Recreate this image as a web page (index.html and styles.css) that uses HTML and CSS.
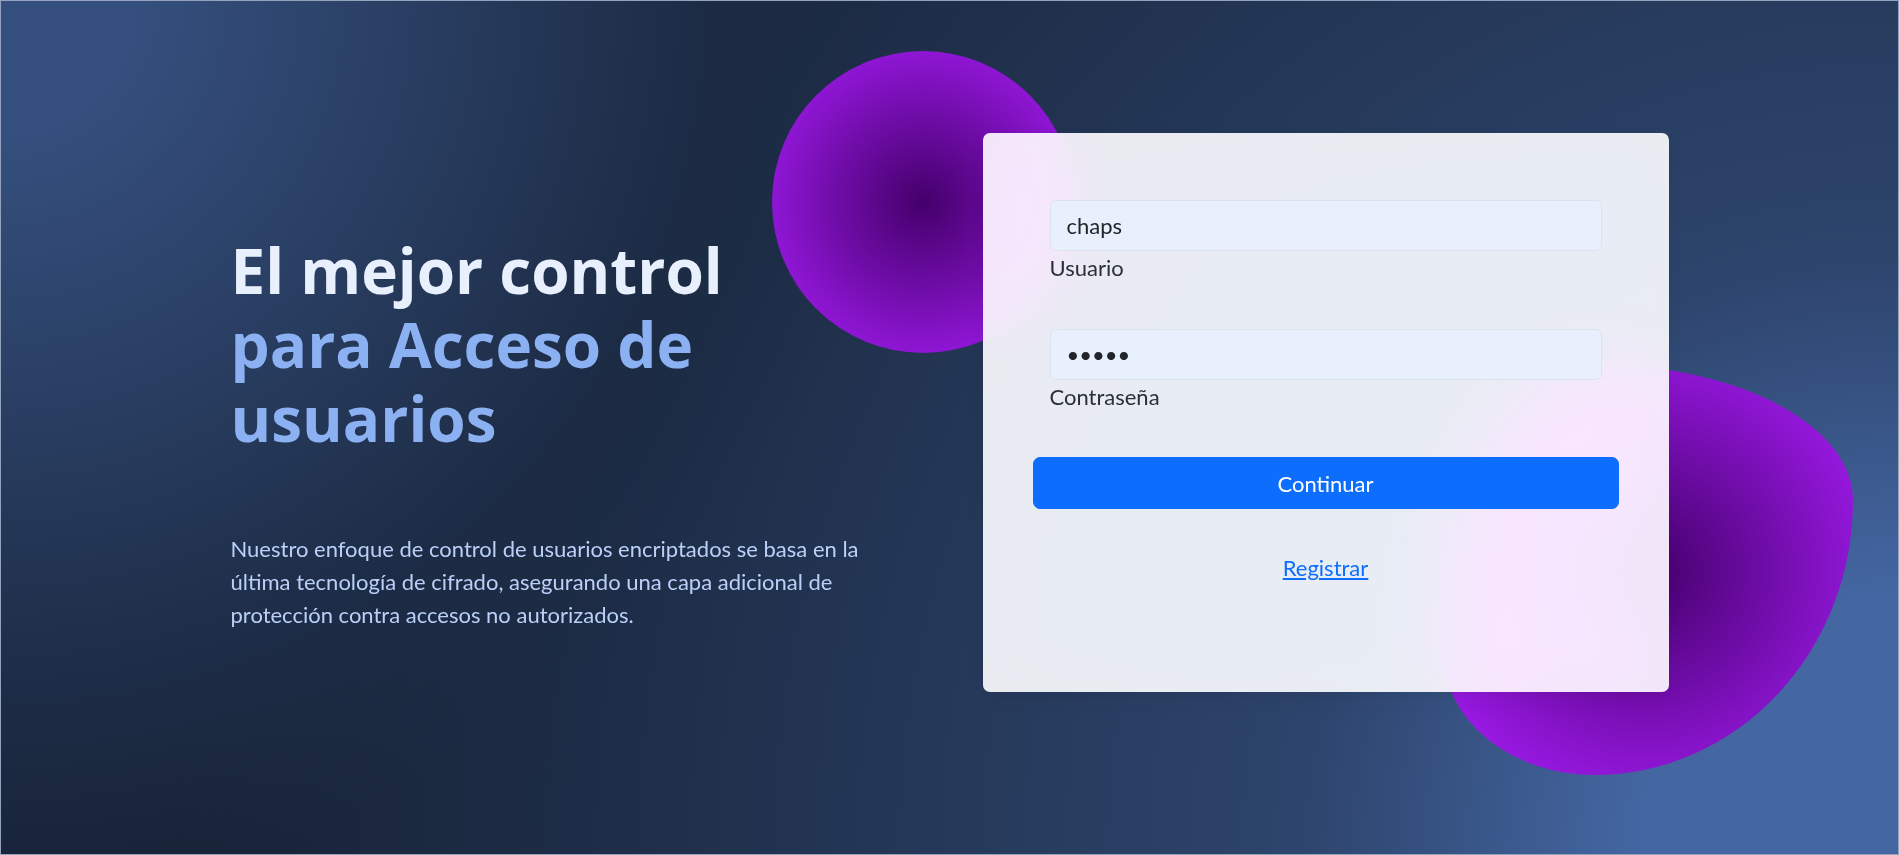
FILE: index.html
```html
<!DOCTYPE html>
<html lang="es">
<head>
<meta charset="utf-8">
<title>Acceso de usuarios</title>
<link rel="stylesheet" href="styles.css">
</head>
<body>
<section class="hero">
  <div class="container">
    <div class="col col-text">
      <h1 class="headline">El mejor control<br><span class="headline-accent">para Acceso de usuarios</span></h1>
      <p class="lead-text">Nuestro enfoque de control de usuarios encriptados se basa en la última tecnología de cifrado, asegurando una capa adicional de protección contra accesos no autorizados.</p>
    </div>
    <div class="col col-form">
      <div class="shape shape-circle"></div>
      <div class="shape shape-blob"></div>
      <div class="card">
        <form class="form">
          <div class="field">
            <input class="input" type="text" value="chaps" id="usuario">
            <label class="label" for="usuario">Usuario</label>
          </div>
          <div class="field field-last">
            <input class="input" type="password" value="12345" id="clave">
            <label class="label" for="clave">Contraseña</label>
          </div>
          <button class="btn" type="button">Continuar</button>
          <div class="register"><a href="#" class="link">Registrar</a></div>
        </form>
      </div>
    </div>
  </div>
</section>
</body>
</html>
```
FILE: styles.css
```css
* { box-sizing: border-box; }

html, body {
  margin: 0;
  padding: 0;
}

body {
  font-family: "Lato", "Liberation Sans", sans-serif;
  font-size: 22px;
  line-height: 33px;
  color: #212529;
}

.hero {
  width: 1899px;
  height: 855px;
  overflow: hidden;
  border: 1px solid #93a2bd;
  background-color: hsl(218, 41%, 15%);
  background-image:
    radial-gradient(894px circle at 0% 0%,
      hsl(218, 41%, 35%) 15%,
      hsl(218, 41%, 30%) 35%,
      hsl(218, 41%, 20%) 75%,
      hsl(218, 41%, 19%) 80%,
      transparent 100%),
    radial-gradient(1719px circle at 100% 100%,
      hsl(218, 41%, 45%) 15%,
      hsl(218, 41%, 30%) 35%,
      hsl(218, 41%, 20%) 75%,
      hsl(218, 41%, 19%) 80%,
      transparent 100%);
  padding-top: 132px;
}

.container {
  width: 1504px;
  margin: 0 auto;
  display: flex;
  align-items: center;
}

.col {
  width: 50%;
  padding: 0 33px;
}

.col-text {
  position: relative;
  z-index: 10;
}

.headline {
  margin: 66px 0 77px;
  font-family: "Open Sans", "Liberation Sans", sans-serif;
  font-weight: 700;
  font-size: 62px;
  line-height: 74px;
  color: hsl(218, 81%, 95%);
}

.headline-accent {
  color: hsl(218, 81%, 75%);
}

.lead-text {
  margin: 0 0 27px;
  font-size: 22px;
  line-height: 33px;
  color: hsl(218, 81%, 85%);
}

.col-form {
  position: relative;
}

.shape {
  position: absolute;
  background: radial-gradient(#44006b, #ad1fff);
}

.shape-circle {
  width: 302px;
  height: 302px;
  top: -82px;
  left: -178px;
  border-radius: 50%;
}

.shape-blob {
  width: 410px;
  height: 410px;
  bottom: -83px;
  right: -151px;
  border-radius: 38% 62% 63% 37% / 70% 33% 67% 30%;
}

.card {
  position: relative;
  z-index: 2;
  border-radius: 7px;
  background-color: hsla(0, 0%, 100%, 0.9);
  backdrop-filter: saturate(200%) blur(34px);
  -webkit-backdrop-filter: saturate(200%) blur(34px);
  padding: 67px 67px 66px;
  box-shadow: 0 2px 15px -3px rgba(0, 0, 0, 0.07), 0 10px 20px -2px rgba(0, 0, 0, 0.04);
}

.form {
  margin: 0;
}

.field {
  margin-bottom: 45px;
}

.field-last {
  margin-bottom: 44px;
}

.input {
  display: block;
  width: 100%;
  height: 51px;
  padding: 0 16px;
  border: 1px solid #dde3ec;
  border-radius: 6px;
  background-color: #e8f0fe;
  font-family: "Lato", "Liberation Sans", sans-serif;
  font-size: 22px;
  color: #212529;
  outline: none;
}

.label {
  display: block;
  font-size: 22px;
  line-height: 33px;
  color: #2b2f36;
}

.btn {
  display: block;
  width: calc(100% + 34px);
  margin: 0 -17px;
  height: 52px;
  border: 1px solid #0d6efd;
  border-radius: 7px;
  background-color: #0d6efd;
  color: #ffffff;
  font-family: "Lato", "Liberation Sans", sans-serif;
  font-size: 22px;
  line-height: 33px;
  cursor: pointer;
}

.register {
  margin-top: 42px;
  padding-bottom: 42px;
  text-align: center;
}

.link {
  color: #0d6efd;
  text-decoration: underline;
}
```
